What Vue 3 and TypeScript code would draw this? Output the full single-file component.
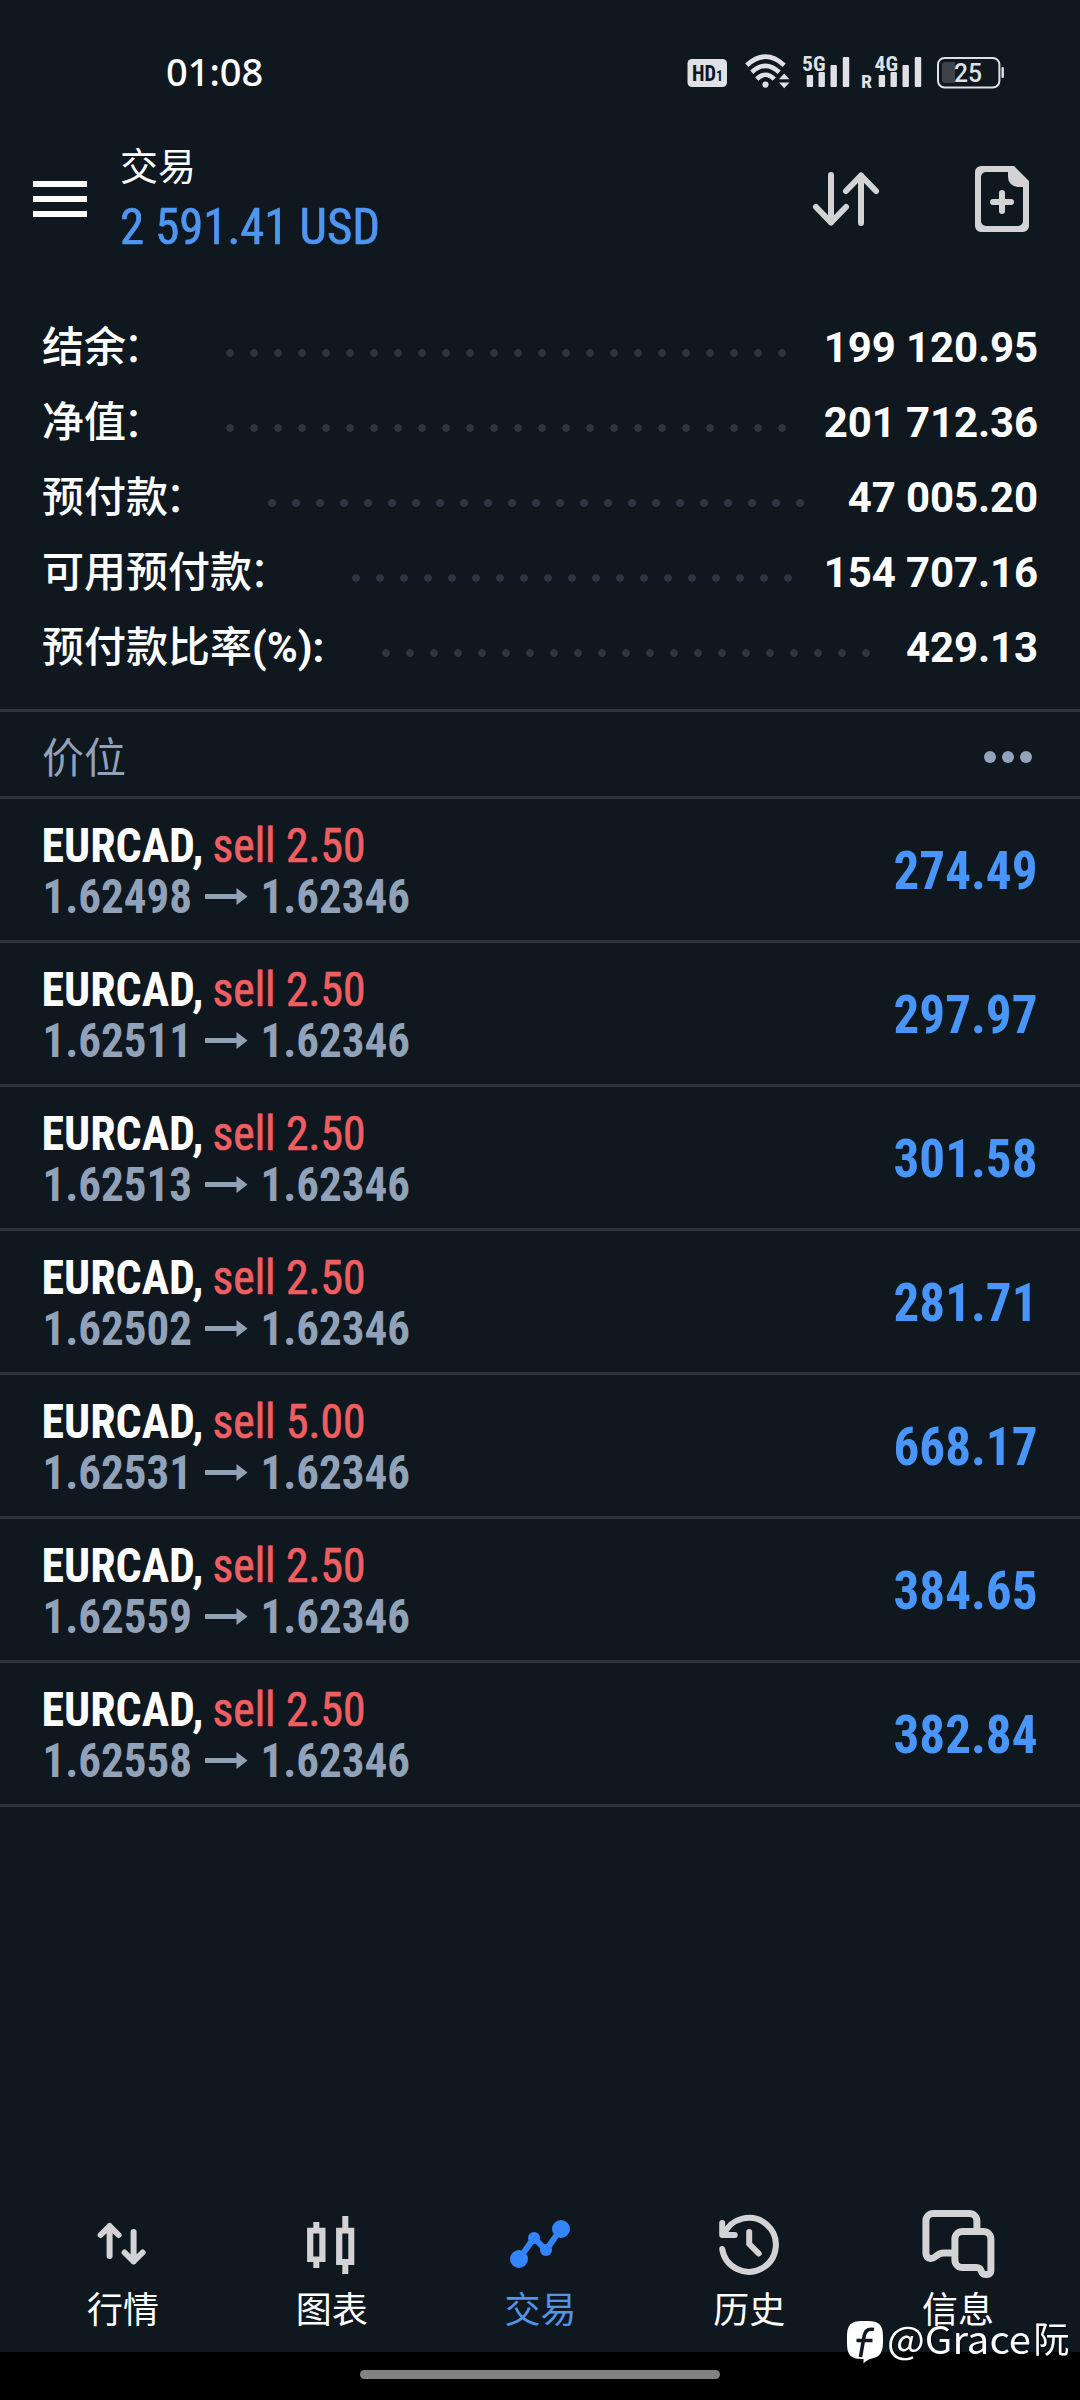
<script setup lang="ts">
interface Stat { label: string; suffix: string; wide: boolean; value: string; dots: number }
interface Position { symbol: string; side: string; volume: string; open: string; current: string; profit: string }
interface Tab { id: string; label: string }

const stats: Stat[] = [
  { label: '结余', suffix: '：', wide: true, value: '199 120.95', dots: 24 },
  { label: '净值', suffix: '：', wide: true, value: '201 712.36', dots: 24 },
  { label: '预付款', suffix: '：', wide: true, value: '47 005.20', dots: 23 },
  { label: '可用预付款', suffix: '：', wide: true, value: '154 707.16', dots: 19 },
  { label: '预付款比率', suffix: '(%):', wide: false, value: '429.13', dots: 21 },
]

const rows: [string, string, string][] = [
  ['2.50', '1.62498', '274.49'],
  ['2.50', '1.62511', '297.97'],
  ['2.50', '1.62513', '301.58'],
  ['2.50', '1.62502', '281.71'],
  ['5.00', '1.62531', '668.17'],
  ['2.50', '1.62559', '384.65'],
  ['2.50', '1.62558', '382.84'],
]
const positions: Position[] = rows.map(([volume, open, profit]) => ({
  symbol: 'EURCAD', side: 'sell', volume, open, current: '1.62346', profit,
}))

const tabs: Tab[] = [
  { id: 'quotes', label: '行情' },
  { id: 'charts', label: '图表' },
  { id: 'trade', label: '交易' },
  { id: 'history', label: '历史' },
  { id: 'messages', label: '信息' },
]
const activeTab = 'trade'
</script>

<template>
  <div class="screen">
    <div class="status">
      <span class="clock">01:08</span>
      <svg class="status-icons" width="330" height="40" viewBox="680 52 330 40">
        <rect x="687.5" y="59" width="39.5" height="28" rx="4.5" fill="#dfe1e5" />
        <text x="692" y="81" class="s-bold" font-size="22" textLength="24" lengthAdjust="spacingAndGlyphs" fill="#10171f">HD</text>
        <text x="716" y="81" class="s-bold" font-size="14" textLength="7" lengthAdjust="spacingAndGlyphs" fill="#10171f">1</text>
        <g fill="none" stroke="#dfe1e5" stroke-width="4.6">
          <path d="M746.8 65.2Q765.5 48.2 784.2 65.2" />
          <path d="M751.8 72.2Q765.5 59.5 779.2 72.2" />
          <path d="M756.8 79.2Q765.5 70.4 774.2 79.2" />
        </g>
        <g fill="#dfe1e5">
          <circle cx="765.5" cy="84.6" r="3.1" />
          <path d="M779 79.2L784.2 73.6L789.4 79.2ZM779 82.4L784.2 88.2L789.4 82.4Z" />
          <g v-for="dx in [0, 72]" :key="dx" :transform="`translate(${dx} 0)`">
            <rect x="806.7" y="75" width="6.4" height="12" rx="1" />
            <rect x="818.5" y="72" width="6.4" height="15" rx="1" />
            <rect x="830.5" y="65" width="6.4" height="22" rx="1" />
            <rect x="842.8" y="57" width="6.4" height="30" rx="1" />
          </g>
          <text x="802" y="70.5" class="s-bold" font-size="21" textLength="23.5" lengthAdjust="spacingAndGlyphs">5G</text>
          <text x="874.5" y="70.5" class="s-bold" font-size="21" textLength="23.5" lengthAdjust="spacingAndGlyphs">4G</text>
          <text x="861" y="88" class="s-bold" font-size="18" textLength="11" lengthAdjust="spacingAndGlyphs">R</text>
          <rect x="1001.5" y="67" width="2.4" height="11" rx="1" />
        </g>
        <rect x="938" y="58" width="61.4" height="29.4" rx="6.5" fill="none" stroke="#dfe1e5" stroke-width="2" />
        <path d="M955 62H945.5a3.5 3.5 0 0 0-3.5 3.5V79.5a3.5 3.5 0 0 0 3.5 3.5H955Z" fill="#3d424b" />
        <text x="954" y="81.5" class="s-med" font-size="25" textLength="28" lengthAdjust="spacingAndGlyphs" fill="#dfe1e5">25</text>
      </svg>
    </div>

    <header class="header">
      <svg class="menu" width="54" height="36" viewBox="0 0 54 36" fill="#fff">
        <path d="M0 0H54V6H0ZM0 15H54V21H0ZM0 30H54V36H0Z" />
      </svg>
      <div class="titles">
        <div class="title">交易</div>
        <svg class="total" width="280" height="60">
          <text x="0" y="45" class="cond thick" font-size="50" textLength="260" lengthAdjust="spacingAndGlyphs" fill="#4f96f1" stroke="#4f96f1">2 591.41 USD</text>
        </svg>
      </div>
      <svg class="sort" width="66" height="54" viewBox="813 172 66 54" fill="none" stroke="#d3d3d5" stroke-width="6" stroke-linecap="round" stroke-linejoin="round">
        <path d="M831 175V222.5M816 207L831 222.5L846 207M861 223V175.5M846 191L861 175.5L876 191" />
      </svg>
      <svg width="54" height="66" viewBox="975 166 54 66">
        <path fill="#d3d3d5" fill-rule="evenodd" d="M981 166H1014L1029 181V226a6 6 0 0 1-6 6H981a6 6 0 0 1-6-6V172a6 6 0 0 1 6-6ZM986 172a5 5 0 0 0-5 5V221a5 5 0 0 0 5 5H1018a5 5 0 0 0 5-5V187H1018a10 10 0 0 1-10-10V172Z" />
        <path d="M1002 193V211M993 202H1011" stroke="#d3d3d5" stroke-width="6" stroke-linecap="round" />
      </svg>
    </header>

    <section class="stats">
      <div v-for="s in stats" :key="s.label" class="stat">
        <span class="label">{{ s.label }}<span :class="s.wide ? 'colon' : 'unit'">{{ s.suffix }}</span></span>
        <span class="dots" :style="{ width: s.dots * 24 + 'px' }"></span>
        <span class="value">{{ s.value }}</span>
      </div>
    </section>

    <div class="section-head">
      <span>价位</span>
      <svg class="more" width="48" height="12" viewBox="0 0 48 12" fill="#94a3b9">
        <circle cx="6" cy="6" r="6" /><circle cx="24" cy="6" r="6" /><circle cx="42" cy="6" r="6" />
      </svg>
    </div>

    <div v-for="p in positions" :key="p.open" class="position">
      <div class="detail">
        <svg width="380" height="54" viewBox="42 817 380 54">
          <text x="41.5" y="862.5" class="cond bold" font-size="48" textLength="162" lengthAdjust="spacingAndGlyphs" fill="#fff">{{ p.symbol }},</text>
          <text x="212.5" y="862.5" class="cond thick" font-size="48" textLength="153" lengthAdjust="spacingAndGlyphs" fill="#ef5f62" stroke="#ef5f62">{{ p.side }} {{ p.volume }}</text>
        </svg>
        <svg width="380" height="54" viewBox="42 871 380 54" fill="#90a1b8">
          <text x="42.5" y="913.5" class="cond bold" font-size="48" textLength="149.5" lengthAdjust="spacingAndGlyphs">{{ p.open }}</text>
          <path d="M205 895H236.5V889L247.500 897.5L236.500 906V900H205Z" />
          <text x="260.5" y="913.5" class="cond bold" font-size="48" textLength="149.5" lengthAdjust="spacingAndGlyphs">{{ p.current }}</text>
        </svg>
      </div>
      <svg width="160" height="80" viewBox="878 830 160 80">
        <text x="893.5" y="889" class="cond bold" font-size="54" textLength="144" lengthAdjust="spacingAndGlyphs" fill="#4896fb">{{ p.profit }}</text>
      </svg>
    </div>

    <nav class="tabs">
      <div v-for="t in tabs" :key="t.id" class="tab" :class="{ active: t.id === activeTab }">
        <svg v-if="t.id === 'quotes'" width="76" height="76" viewBox="84.4 2206 76 76" fill="none" stroke="#d3d3d5" stroke-width="6" stroke-linecap="round" stroke-linejoin="round">
          <path d="M110 2256V2226M101 2235L110 2226L119 2235M134 2232V2261.5M125 2252.5L134 2261.5L143 2252.5" />
        </svg>
        <svg v-else-if="t.id === 'charts'" width="76" height="76" viewBox="293.2 2206 76 76" fill="#d3d3d5" fill-rule="evenodd">
          <path d="M313.5 2222H319.5V2227.7H325.7V2262H319.5V2268H313.5V2262H307.3V2227.7H313.5ZM313.5 2233.5V2256.5H319.5V2233.5Z" />
          <path d="M342.5 2216H348.5V2227.7H354.5V2265H348.5V2274H342.5V2265H336.3V2227.7H342.5ZM342.5 2233.5V2259H348.5V2233.5Z" />
        </svg>
        <svg v-else-if="t.id === 'trade'" width="76" height="76" viewBox="502 2206 76 76" fill="#3483ff">
          <path d="M519 2259L534 2238L546 2250L561 2229" fill="none" stroke="#3483ff" stroke-width="6" />
          <circle cx="519" cy="2259" r="9" /><circle cx="534" cy="2238" r="6" />
          <circle cx="546" cy="2250" r="6" /><circle cx="561" cy="2229" r="9" />
        </svg>
        <svg v-else-if="t.id === 'history'" width="76" height="76" viewBox="710.8 2206 76 76" fill="none" stroke="#d3d3d5" stroke-width="6" stroke-linecap="round" stroke-linejoin="round">
          <path d="M722 2249A27 27 0 1 0 723.5 2235M722 2223V2235H734.5M749 2232V2244L758.5 2253.5" />
        </svg>
        <svg v-else width="76" height="76" viewBox="919.6 2206 76 76" fill="none" stroke="#d3d3d5" stroke-width="7" stroke-linejoin="round">
          <path d="M954 2253H943C936 2253 936 2258.5 930.5 2258.5C927 2258.5 925.5 2256 925.5 2253V2221a7.5 7.5 0 0 1 7.5-7.5H969a7.5 7.5 0 0 1 7.5 7.5V2231" />
          <path d="M962 2231.5H983a7.5 7.5 0 0 1 7.5 7.5V2271C990.5 2275.5 983 2275.5 981.5 2272.5C980.5 2269.5 979.5 2267.5 976 2267.5H962a7.5 7.5 0 0 1-7.5-7.5V2239a7.5 7.5 0 0 1 7.5-7.5Z" />
        </svg>
        <span class="tab-label">{{ t.label }}</span>
      </div>
    </nav>

    <div class="gesture"><div class="pill"></div></div>

    <div class="watermark">
      <svg width="234" height="66" viewBox="846 2308 234 66">
        <path fill="#fff" d="M862 2321H867.5C879.5 2321 883 2325 883 2337V2342C883 2352 880 2357 872 2358.5C868 2359.500 866 2361 863.5 2363.5V2359H862C850.5 2359 847 2355 847 2343V2337C847 2325 850.5 2321 862 2321Z" />
        <path d="M874 2329.5C866.5 2328 864.8 2332 863.8 2338L860.5 2357M856.5 2340.5H872.5" fill="none" stroke="#10171f" stroke-width="3.6" />
        <g class="wm">
          <text x="887" y="2353.5" font-size="38" textLength="144" lengthAdjust="spacingAndGlyphs" fill="#fff">@Grace</text>
          <text x="1033.5" y="2352.5" font-size="36" fill="#fff">阮</text>
        </g>
      </svg>
    </div>
  </div>
</template>

<style>
body { background: #0f171f; }
</style>

<style scoped>
.screen {
  position: relative;
  display: flex;
  flex-direction: column;
  width: 1080px;
  height: 2400px;
  overflow: hidden;
  background: #0f171f;
  color: #fff;
  font-family: Roboto, "Noto Sans CJK SC", sans-serif;
}
svg { display: block; flex: none; overflow: visible; }
.s-bold { font-family: "Roboto Condensed", Roboto, sans-serif; font-weight: 700; }
.s-med { font-family: Roboto, sans-serif; font-weight: 500; }
.cond { font-family: "Roboto Condensed", Roboto, sans-serif; font-weight: 400; }
.cond.bold { font-weight: 700; }
.thick { stroke-width: 0.7px; }
.status {
  display: flex;
  justify-content: space-between;
  align-items: center;
  height: 40px;
  padding: 51px 70px 1px 166px;
}
.status-icons { margin-top: 2px; }
.clock { font: 500 38px/40px "Noto Sans", sans-serif; }
.header {
  display: flex;
  align-items: center;
  height: 110px;
  margin-top: 52px;
  padding: 0 51px 0 33px;
}
.titles { margin-left: 33px; flex: 1; height: 108px; }
.title { font-size: 38px; line-height: 44px; }
.total { margin-top: 10px; }
.sort { margin-right: 96px; }
.stats { height: 375px; margin-top: 54px; }
.stat {
  display: flex;
  align-items: center;
  height: 75px;
  padding: 0 42px;
  font-size: 42px;
  line-height: 73px;
  white-space: nowrap;
}
.label { font-weight: 500; padding-top: 4px; }
.colon { display: inline-block; width: 42px; text-indent: -3px; font-weight: 400; }
.unit { font-weight: 700; }
.dots {
  height: 8px;
  margin: 15px 0 0 58px;
  background: radial-gradient(circle at 4px 4px, #2e3542 3.5px, transparent 4.3px) 0 0 / 24px 8px repeat-x;
}
.value { margin-left: auto; padding-top: 3px; font-weight: 700; letter-spacing: -0.12px; }
.section-head {
  display: flex;
  align-items: center;
  justify-content: space-between;
  height: 84px;
  margin-top: 26px;
  padding: 0 48px 0 42px;
  border-top: 3px solid #2c3442;
  border-bottom: 3px solid #2c3442;
  color: #90a1b8;
  font-size: 42px;
}
.more { margin-top: 5px; }
.position {
  display: flex;
  align-items: center;
  justify-content: space-between;
  height: 141px;
  padding: 0 42px;
  border-bottom: 3px solid #2c3442;
}
.detail { display: flex; flex-direction: column; padding-top: 1px; }
.tabs {
  display: flex;
  margin-top: auto;
  height: 146px;
  padding: 0 18px;
}
.tab {
  flex: 1;
  display: flex;
  flex-direction: column;
  align-items: center;
  font-size: 36px;
  line-height: 54px;
}
.tab-label { padding: 2px 0 0 1px; }
.tab.active { color: #5393e8; }
.gesture {
  display: flex;
  justify-content: center;
  height: 30px;
  padding-top: 18px;
  background: #000;
}
.pill { width: 360px; height: 9px; border-radius: 5px; background: #828282; }
.watermark { position: absolute; right: 0; top: 2308px; }
.wm { font-family: "Noto Sans CJK SC", sans-serif; filter: drop-shadow(1px 1px 1px #000a); }
</style>
